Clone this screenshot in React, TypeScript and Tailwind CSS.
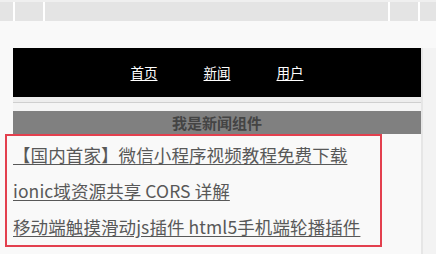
import React from "react";

const font = { fontFamily: '"Noto Sans CJK SC", "Noto Sans", sans-serif' };

export default function App() {
  const links = [
    "【国内首家】微信小程序视频教程免费下载",
    "ionic域资源共享 CORS 详解",
    "移动端触摸滑动js插件 html5手机端轮播插件",
  ];
  return (
    <div
      className="relative w-[436px] h-[254px] overflow-hidden bg-[#f9f9f9]"
      style={font}
    >
      {/* top toolbar */}
      <div className="flex h-[21px] bg-[#e4e4e4] border-t-2 border-[#efefef]">
        <div className="w-[13px]" />
        <div className="w-[2px] bg-white" />
        <div className="w-[28px]" />
        <div className="w-[2px] bg-white" />
        <div className="flex-1" />
        <div className="w-[2px] bg-white" />
        <div className="w-[28px]" />
        <div className="w-[2px] bg-white" />
        <div className="w-[16px]" />
      </div>
      <div className="h-[27px]" />
      <div className="flex">
        <div className="w-[13px]" />
        <div className="w-[408px] flex flex-col">
          <nav className="h-[49px] bg-black flex items-center justify-center gap-[46px] text-[13.5px] text-white">
            <a className="underline underline-offset-2">首页</a>
            <a className="underline underline-offset-2">新闻</a>
            <a className="underline underline-offset-2">用户</a>
          </nav>
          <div className="h-[5px] bg-[#ededed]" />
          <div className="h-[1px] bg-[#cfcfcf]" />
          <div className="h-[8px] bg-[#f4f4f4]" />
          <div className="h-[23px] bg-[#808080] flex items-center justify-center text-[15px] font-bold text-[#444] leading-none">
            我是新闻组件
          </div>
          <div className="pt-[3px] flex flex-col">
            {links.map((t) => (
              <a
                key={t}
                className="h-[36px] leading-[36px] text-[17.5px] tracking-[0.1px] text-[#585858] underline underline-offset-2 whitespace-nowrap"
              >
                {t}
              </a>
            ))}
          </div>
        </div>
        <div className="flex-1 border-l-2 border-[#e6e6e6] bg-[#f3f3f3] h-[206px]" />
      </div>
      {/* highlight overlay */}
      <div className="absolute left-[5px] top-[134px] w-[377px] h-[113px] border-2 border-[#e3404e]" />
    </div>
  );
}
